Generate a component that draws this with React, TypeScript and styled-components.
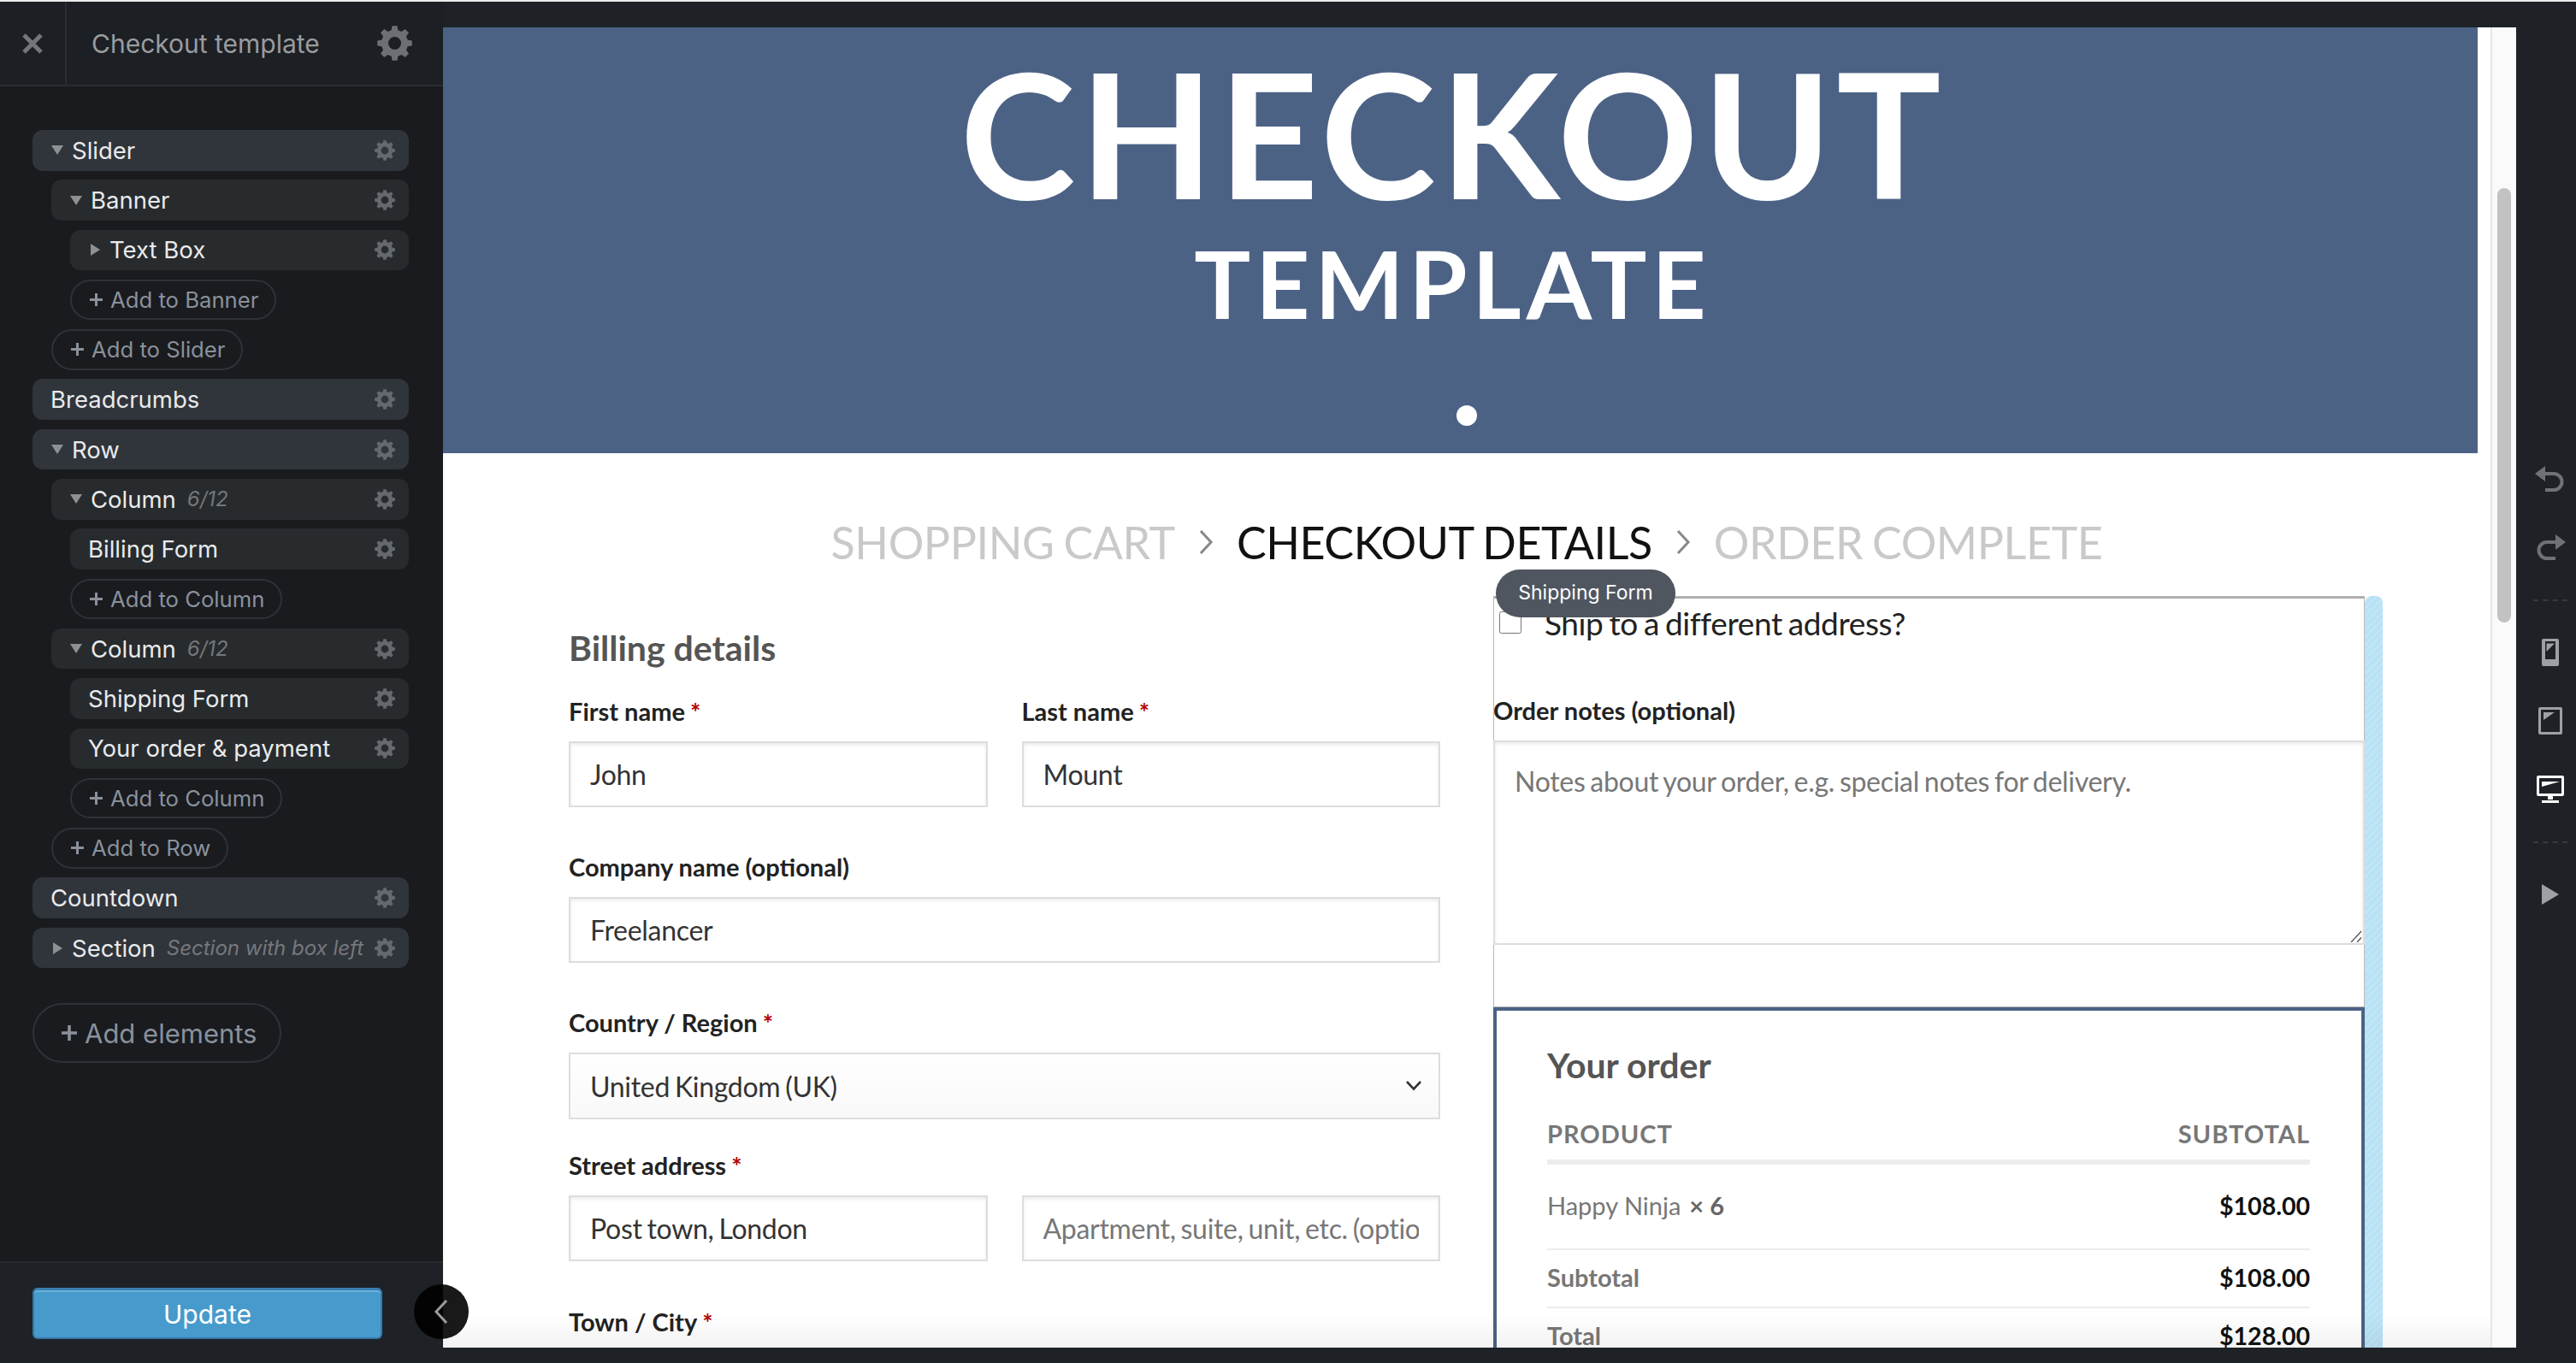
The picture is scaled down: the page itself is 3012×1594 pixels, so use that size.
import React from "react";
import styled, { createGlobalStyle } from "styled-components";

const GlobalStyle = createGlobalStyle`
	html, body {
		margin: 0;
		padding: 0;
		background: #1e2226;
		overflow: hidden;
	}
	* {
		box-sizing: border-box;
	}
`;

const Shell = styled.div`
	position: relative;
	display: grid;
	grid-template-columns: 518px 1fr 70px;
	width: 3012px;
	height: 1594px;
	overflow: hidden;
	border-top: 2px solid #ececec;
	background: #1e2226;
`;

/* ---------- sidebar ---------- */

const Sidebar = styled.aside`
	display: flex;
	flex-direction: column;
	height: 1592px;
	background: #191b1f;
	font-family: Inter, "Liberation Sans", sans-serif;
`;

const SideHeader = styled.header`
	display: flex;
	align-items: stretch;
	height: 99px;
	flex: none;
	background: #1c1f23;
	border-bottom: 2px solid #2a2d31;
`;

const CloseCell = styled.div`
	display: flex;
	align-items: center;
	justify-content: center;
	width: 78px;
	border-right: 2px solid #2a2d31;
	color: #74777a;
`;

const SideTitle = styled.div`
	flex: 1;
	padding-left: 29px;
	font-size: 30px;
	line-height: 98px;
	color: #9a9c9f;
`;

const HeaderGear = styled.div`
	display: flex;
	align-items: center;
	padding-right: 36px;
	color: #6d7073;
`;

const Tree = styled.div`
	flex: 1;
	padding: 51px 40px 0 38px;
`;

const TreeRow = styled.div<{ $level: number }>`
	display: flex;
	align-items: center;
	height: 47.5px;
	margin: 0 0 10.8px ${(p) => p.$level * 22}px;
	padding: 0 16px 0 21px;
	border-radius: 12px;
	background: ${(p) => (p.$level === 0 ? "#30343b" : "#272b2e")};
	color: #e9eaeb;
	font-size: 27.5px;
	white-space: nowrap;
`;

const RowCaret = styled.span`
	display: flex;
	align-items: center;
	justify-content: center;
	width: 14px;
	margin-left: 1px;
	margin-right: 10px;
	color: #8e9093;
`;

const RowHint = styled.span`
	flex: 1;
	min-width: 0;
	margin-left: 13px;
	font-size: 24px;
	font-style: italic;
	color: #75787b;
`;

const RowSpacer = styled.span`
	flex: 1;
`;

const RowGear = styled.span`
	display: flex;
	flex: none;
	margin-left: 8px;
	color: #65696e;
`;

const AddPill = styled.div<{ $level: number }>`
	display: flex;
	align-items: center;
	width: fit-content;
	height: 47.5px;
	margin: 0 0 10.8px ${(p) => p.$level * 22}px;
	padding: 0 19px 0 21px;
	border: 2px solid #2e3237;
	border-radius: 24px;
	color: #8a919b;
	font-size: 25.7px;
	white-space: nowrap;
`;

const PlusMark = styled.span`
	display: flex;
	margin-right: 9px;
`;

const AddElements = styled.div`
	display: flex;
	align-items: center;
	width: 291px;
	height: 70px;
	margin-top: 41px;
	padding-left: 32px;
	border: 2px solid #2e3237;
	border-radius: 35px;
	color: #8a919b;
	font-size: 31px;
	white-space: nowrap;
`;

const SideFooter = styled.footer`
	flex: none;
	height: 119px;
	padding: 29px 0 0 38px;
	background: #1e2226;
	border-top: 2px solid #272a2e;
`;

const UpdateButton = styled.button`
	display: block;
	width: 409px;
	height: 60px;
	padding: 0;
	border: 2px solid #3577a8;
	border-top: 3px solid #3a7fb2;
	border-radius: 6px;
	background: #479bcc;
	box-shadow: inset 0 2px 0 #6cb2dc;
	color: #fff;
	font-family: inherit;
	font-size: 30px;
`;

const CollapseButton = styled.div`
	position: absolute;
	left: 484px;
	top: 1500px;
	display: flex;
	align-items: center;
	justify-content: center;
	width: 64px;
	height: 64px;
	border-radius: 50%;
	background: rgba(0, 0, 0, 0.9);
	color: #9a9c9f;
`;

/* ---------- canvas ---------- */

const Canvas = styled.main`
	display: flex;
	height: 1544px;
	margin-top: 30px;
	background: #fff;
	overflow: hidden;
`;

const Page = styled.div`
	position: relative;
	flex: 1;
	min-width: 0;
	overflow: hidden;
	font-family: Lato, "Open Sans", sans-serif;
	color: #111;
`;

const PageFade = styled.div`
	position: absolute;
	left: 0;
	right: 0;
	bottom: 0;
	height: 40px;
	background: linear-gradient(rgba(0, 0, 0, 0), rgba(0, 0, 0, 0.05));
	pointer-events: none;
`;

const ScrollTrack = styled.div`
	flex: none;
	width: 30px;
	padding: 188px 6px 0;
	background: #fafafa;
	border-left: 2px solid #e6e6e6;
`;

const ScrollThumb = styled.div`
	width: 16px;
	height: 508px;
	border-radius: 8px;
	background: #c2c2c2;
`;

const Banner = styled.section`
	position: relative;
	display: flex;
	flex-direction: column;
	align-items: center;
	width: 2379px;
	height: 498px;
	padding: 22px 18px 0 0;
	background: #4c6285;
	color: #fff;
`;

const BannerTitle = styled.h1`
	margin: 0;
	font-size: 204px;
	line-height: 200px;
	letter-spacing: 5px;
	font-weight: 700;
`;

const BannerSub = styled.h2`
	margin: 16px 0 0;
	font-size: 110px;
	line-height: 120px;
	letter-spacing: 6px;
	font-weight: 700;
`;

const SlideDot = styled.span`
	position: absolute;
	left: 1185px;
	top: 442px;
	width: 24px;
	height: 24px;
	border-radius: 50%;
	background: #fff;
`;

const Steps = styled.nav`
	display: flex;
	align-items: center;
	justify-content: center;
	gap: 27px;
	height: 60px;
	margin-top: 74px;
`;

const Step = styled.span<{ $active?: boolean }>`
	font-size: 52px;
	line-height: 60px;
	letter-spacing: -0.4px;
	word-spacing: -2px;
	color: ${(p) => (p.$active ? "#111" : "#c9c9c9")};
`;

const StepArrow = styled.span`
	display: flex;
	color: #888;
`;

const Columns = styled.div`
	display: grid;
	grid-template-columns: 1019px 1019px;
	column-gap: 62px;
	margin-top: 33px;
	padding-left: 147px;
`;

const BillingColumn = styled.div`
	padding-top: 41px;
`;

const SectionHeading = styled.h3`
	margin: 0;
	font-size: 41px;
	line-height: 40px;
	font-weight: 700;
	color: #555;
`;

const BillingHeading = styled(SectionHeading)`
	margin-bottom: 34px;
`;

const FieldRow = styled.div`
	display: grid;
	grid-template-columns: 1fr 1fr;
	column-gap: 40px;
`;

const Field = styled.div<{ $after?: number }>`
	margin-bottom: ${(p) => p.$after ?? 50}px;
`;

const FieldLabel = styled.label`
	display: block;
	margin-bottom: 15px;
	font-size: 29px;
	line-height: 40px;
	font-weight: 700;
	color: #222;
`;

const Req = styled.span`
	color: #b20000;
	margin-left: 6px;
`;

const TextInput = styled.input`
	display: block;
	width: 100%;
	height: 77px;
	padding: 0 23px;
	border: 2px solid #ddd;
	border-radius: 0;
	outline: none;
	box-shadow: inset 0 2px 4px rgba(0, 0, 0, 0.09);
	background: #fff;
	color: #333;
	font-family: Lato, sans-serif;
	font-size: 32px;
	letter-spacing: -0.3px;
	word-spacing: -2px;
	&::placeholder {
		color: #777;
		opacity: 1;
	}
`;

const SelectWrap = styled.div`
	position: relative;
`;

const SelectBox = styled.select`
	display: block;
	width: 100%;
	height: 78px;
	padding: 0 23px;
	border: 2px solid #ddd;
	border-radius: 0;
	outline: none;
	appearance: none;
	background: linear-gradient(#fff, #f8f8f8);
	color: #333;
	font-family: Lato, sans-serif;
	font-size: 32px;
	letter-spacing: -0.3px;
	word-spacing: -2px;
`;

const SelectChevron = styled.span`
	position: absolute;
	right: 21px;
	top: 32px;
	display: flex;
	color: #333;
`;

const ShippingColumn = styled.div`
	position: relative;
`;

const BlueBar = styled.div`
	position: absolute;
	left: 100%;
	top: 0;
	bottom: 0;
	width: 21px;
	border-radius: 8px 8px 0 0;
	background: repeating-linear-gradient(135deg, #b7e1f5 0 3px, #c0e5f7 3px 6px);
`;

const ShippingForm = styled.div`
	position: relative;
	height: 481px;
	padding-top: 3px;
	border-top: 3px solid #aaa;
	outline: 1px solid #b8b8b8;
	outline-offset: -1px;
`;

const FormTag = styled.div`
	position: absolute;
	left: 3px;
	top: -34px;
	display: flex;
	align-items: center;
	justify-content: center;
	width: 210px;
	height: 56px;
	padding-bottom: 2px;
	border-radius: 28px;
	background: #50565f;
	color: #fff;
	font-family: Inter, "Liberation Sans", sans-serif;
	font-size: 23px;
	z-index: 2;
`;

const CheckLine = styled.label`
	display: flex;
	align-items: center;
	height: 50px;
	padding-left: 7px;
	font-size: 37px;
	letter-spacing: -0.4px;
	word-spacing: -2px;
	color: #222;
`;

const CheckInput = styled.input`
	width: 26px;
	height: 26px;
	margin: 0 27px 0 0;
`;

const NotesLabel = styled(FieldLabel)`
	margin-top: 58px;
	margin-bottom: 15px;
`;

const NotesWrap = styled.div`
	position: relative;
`;

const NotesArea = styled.textarea`
	display: block;
	width: 100%;
	height: 239px;
	padding: 26px 23px;
	border: 2px solid #ddd;
	border-radius: 0;
	outline: none;
	resize: none;
	box-shadow: inset 0 2px 4px rgba(0, 0, 0, 0.09);
	font-family: Lato, sans-serif;
	font-size: 32px;
	letter-spacing: -0.3px;
	word-spacing: -2px;
	&::placeholder {
		color: #777;
		opacity: 1;
	}
`;

const NotesGrip = styled.span`
	position: absolute;
	right: 3px;
	bottom: 3px;
	display: flex;
	color: #555;
`;

const OrderBox = styled.section`
	padding: 39px 60px 0 59px;
	border: 4px solid #4c6285;
	border-bottom: 0;
`;

const OrderHeading = styled(SectionHeading)`
	line-height: 50px;
	margin-bottom: 35px;
`;

const OrderHead = styled.div`
	display: flex;
	justify-content: space-between;
	padding-bottom: 10px;
	border-bottom: 6px solid #ececec;
	font-size: 29px;
	line-height: 40px;
	font-weight: 700;
	letter-spacing: 1px;
	color: #777;
`;

const OrderLine = styled.div<{ $tall?: boolean }>`
	display: flex;
	align-items: center;
	justify-content: space-between;
	height: ${(p) => (p.$tall ? 100 : 68)}px;
	padding-bottom: 3px;
	border-bottom: 2px solid #ececec;
	font-size: 29px;
	color: #777;
`;

const OrderName = styled.span<{ $strong?: boolean }>`
	font-weight: ${(p) => (p.$strong ? 700 : 400)};
`;

const OrderQty = styled.strong`
	margin-left: 10px;
	color: #666;
`;

const OrderPrice = styled.strong`
	font-size: 28.5px;
	color: #111;
`;

/* ---------- right rail ---------- */

const Rail = styled.aside`
	display: flex;
	flex-direction: column;
	align-items: center;
	padding: 518px 0 0 10px;
	background: #1e2226;
`;

const RailButton = styled.div`
	display: flex;
	align-items: center;
	justify-content: center;
	flex: none;
	height: 80px;
	width: 100%;
`;

const RailDivider = styled.div`
	flex: none;
	width: 40px;
	margin: 21px 0 20px;
	border-top: 2px dashed #363a3e;
`;

/* ---------- icons ---------- */

const gearPath = (() => {
	const teeth = 8;
	const outer = 12;
	const inner = 9.2;
	const pts: string[] = [];
	for (let i = 0; i < teeth; i++) {
		const a = (i / teeth) * Math.PI * 2;
		const w = Math.PI / teeth;
		[
			[inner, a - w * 0.62],
			[outer, a - w * 0.38],
			[outer, a + w * 0.38],
			[inner, a + w * 0.62],
		].forEach(([r, t]) => {
			pts.push(`${(12 + r * Math.cos(t)).toFixed(2)} ${(12 + r * Math.sin(t)).toFixed(2)}`);
		});
	}
	return `M${pts.join("L")}ZM12 7.6a4.4 4.4 0 1 0 0 8.8a4.4 4.4 0 1 0 0-8.8Z`;
})();

const Gear = ({ size }: { size: number }) => (
	<svg width={size} height={size} viewBox="0 0 24 24" fill="currentColor">
		<path fillRule="evenodd" d={gearPath} />
	</svg>
);

const Cross = () => (
	<svg width="24" height="24" viewBox="0 0 24 24" stroke="currentColor" strokeWidth="5" fill="none">
		<path d="M2 2 22 22M22 2 2 22" />
	</svg>
);

const Caret = ({ open }: { open: boolean }) =>
	open ? (
		<svg width="14" height="11" viewBox="0 0 14 11" fill="currentColor">
			<path d="M0 0h14L7 11Z" />
		</svg>
	) : (
		<svg width="11" height="14" viewBox="0 0 11 14" fill="currentColor">
			<path d="M0 0v14l11-7Z" />
		</svg>
	);

const Plus = ({ size }: { size: number }) => (
	<svg width={size} height={size} viewBox="0 0 16 16" fill="currentColor">
		<path d="M6.4 0h3.2v6.4H16v3.2H9.6V16H6.4V9.6H0V6.4h6.4Z" />
	</svg>
);

const Chevron = ({ dir }: { dir: "left" | "right" }) => (
	<svg width="18" height="28" viewBox="0 0 18 28" fill="none" stroke="currentColor" strokeWidth="3">
		<path d={dir === "right" ? "M3 1 15 14 3 27" : "M15 1 3 14 15 27"} />
	</svg>
);

const UndoIcon = ({ flip }: { flip?: boolean }) => (
	<svg width="36" height="30" viewBox="0 0 36 30" style={flip ? { transform: "scaleX(-1)" } : undefined}>
		<path d="M0 9 12 0v18Z" fill="#6e7275" />
		<path d="M11 9h11a9.5 9.5 0 0 1 0 19H12" fill="none" stroke="#6e7275" strokeWidth="4" />
	</svg>
);

const PhoneIcon = () => (
	<svg width="20" height="32" viewBox="0 0 20 32">
		<rect width="20" height="32" rx="2" fill="#9ea1a4" />
		<rect x="4" y="3" width="12" height="21" fill="#1e2226" />
		<path d="M5.5 15V5.5H15Z" fill="#9ea1a4" />
	</svg>
);

const TabletIcon = () => (
	<svg width="28" height="32" viewBox="0 0 28 32">
		<rect width="28" height="32" rx="2" fill="#9ea1a4" />
		<rect x="3" y="3" width="22" height="26" fill="#1e2226" />
		<path d="M6 15V6h13Z" fill="#9ea1a4" />
	</svg>
);

const DesktopIcon = () => (
	<svg width="32" height="32" viewBox="0 0 32 32">
		<rect width="32" height="24" rx="2" fill="#fff" />
		<rect x="3" y="3" width="26" height="18" fill="#1e2226" />
		<path d="M6 13V7h21Z" fill="#fff" />
		<path d="M13 24h6v4h-6ZM6 29h20v3H6Z" fill="#fff" />
	</svg>
);

const PlayIcon = () => (
	<svg width="20" height="24" viewBox="0 0 20 24" fill="#9ea1a4">
		<path d="M0 0v24l20-12Z" />
	</svg>
);

const SelectArrow = () => (
	<svg width="20" height="13" viewBox="0 0 20 13" fill="none" stroke="currentColor" strokeWidth="2.6">
		<path d="M2 2 10 10.5 18 2" />
	</svg>
);

const GripLines = () => (
	<svg width="14" height="14" viewBox="0 0 14 14" fill="none" stroke="currentColor" strokeWidth="1.3">
		<path d="M1 14 13 1M8 14 13 8.5" />
	</svg>
);

/* ---------- data ---------- */

type TreeItem = {
	level: number;
	label: string;
	add?: boolean;
	caret?: "open" | "closed";
	hint?: string;
};

const treeItems: TreeItem[] = [
	{ level: 0, label: "Slider", caret: "open" },
	{ level: 1, label: "Banner", caret: "open" },
	{ level: 2, label: "Text Box", caret: "closed" },
	{ level: 2, label: "Add to Banner", add: true },
	{ level: 1, label: "Add to Slider", add: true },
	{ level: 0, label: "Breadcrumbs" },
	{ level: 0, label: "Row", caret: "open" },
	{ level: 1, label: "Column", caret: "open", hint: "6/12" },
	{ level: 2, label: "Billing Form" },
	{ level: 2, label: "Add to Column", add: true },
	{ level: 1, label: "Column", caret: "open", hint: "6/12" },
	{ level: 2, label: "Shipping Form" },
	{ level: 2, label: "Your order & payment" },
	{ level: 2, label: "Add to Column", add: true },
	{ level: 1, label: "Add to Row", add: true },
	{ level: 0, label: "Countdown" },
	{ level: 0, label: "Section", caret: "closed", hint: "Section with box left" },
];

const App = () => {
	return (
		<Shell>
			<GlobalStyle />
			<Sidebar>
				<SideHeader>
					<CloseCell>
						<Cross />
					</CloseCell>
					<SideTitle>Checkout template</SideTitle>
					<HeaderGear>
						<Gear size={41} />
					</HeaderGear>
				</SideHeader>
				<Tree>
					{treeItems.map((item, i) =>
						item.add ? (
							<AddPill key={i} $level={item.level}>
								<PlusMark>
									<Plus size={15} />
								</PlusMark>
								{item.label}
							</AddPill>
						) : (
							<TreeRow key={i} $level={item.level}>
								{item.caret && (
									<RowCaret>
										<Caret open={item.caret === "open"} />
									</RowCaret>
								)}
								{item.label}
								{item.hint ? <RowHint>{item.hint}</RowHint> : <RowSpacer />}
								<RowGear>
									<Gear size={24} />
								</RowGear>
							</TreeRow>
						)
					)}
					<AddElements>
						<PlusMark>
							<Plus size={18} />
						</PlusMark>
						Add elements
					</AddElements>
				</Tree>
				<SideFooter>
					<UpdateButton>Update</UpdateButton>
				</SideFooter>
			</Sidebar>

			<Canvas>
				<Page>
					<Banner>
						<BannerTitle>CHECKOUT</BannerTitle>
						<BannerSub>TEMPLATE</BannerSub>
						<SlideDot />
					</Banner>
					<Steps>
						<Step>SHOPPING CART</Step>
						<StepArrow>
							<Chevron dir="right" />
						</StepArrow>
						<Step $active>CHECKOUT DETAILS</Step>
						<StepArrow>
							<Chevron dir="right" />
						</StepArrow>
						<Step>ORDER COMPLETE</Step>
					</Steps>
					<Columns>
						<BillingColumn>
							<BillingHeading>Billing details</BillingHeading>
							<FieldRow>
								<Field>
									<FieldLabel>
										First name<Req>*</Req>
									</FieldLabel>
									<TextInput defaultValue="John" />
								</Field>
								<Field>
									<FieldLabel>
										Last name<Req>*</Req>
									</FieldLabel>
									<TextInput defaultValue="Mount" />
								</Field>
							</FieldRow>
							<Field>
								<FieldLabel>Company name (optional)</FieldLabel>
								<TextInput defaultValue="Freelancer" />
							</Field>
							<Field $after={34}>
								<FieldLabel>
									Country / Region<Req>*</Req>
								</FieldLabel>
								<SelectWrap>
									<SelectBox defaultValue="United Kingdom (UK)">
										<option>United Kingdom (UK)</option>
									</SelectBox>
									<SelectChevron>
										<SelectArrow />
									</SelectChevron>
								</SelectWrap>
							</Field>
							<Field $after={51}>
								<FieldLabel>
									Street address<Req>*</Req>
								</FieldLabel>
								<FieldRow>
									<TextInput defaultValue="Post town, London" />
									<TextInput placeholder="Apartment, suite, unit, etc. (optional)" />
								</FieldRow>
							</Field>
							<FieldLabel>
								Town / City<Req>*</Req>
							</FieldLabel>
						</BillingColumn>

						<ShippingColumn>
							<BlueBar />
							<ShippingForm>
								<FormTag>Shipping Form</FormTag>
								<CheckLine>
									<CheckInput type="checkbox" />
									Ship to a different address?
								</CheckLine>
								<NotesLabel>Order notes (optional)</NotesLabel>
								<NotesWrap>
									<NotesArea placeholder="Notes about your order, e.g. special notes for delivery." />
									<NotesGrip>
										<GripLines />
									</NotesGrip>
								</NotesWrap>
							</ShippingForm>
							<OrderBox>
								<OrderHeading>Your order</OrderHeading>
								<OrderHead>
									<span>PRODUCT</span>
									<span>SUBTOTAL</span>
								</OrderHead>
								<OrderLine $tall>
									<OrderName>
										Happy Ninja<OrderQty>× 6</OrderQty>
									</OrderName>
									<OrderPrice>$108.00</OrderPrice>
								</OrderLine>
								<OrderLine>
									<OrderName $strong>Subtotal</OrderName>
									<OrderPrice>$108.00</OrderPrice>
								</OrderLine>
								<OrderLine>
									<OrderName $strong>Total</OrderName>
									<OrderPrice>$128.00</OrderPrice>
								</OrderLine>
							</OrderBox>
						</ShippingColumn>
					</Columns>
					<PageFade />
				</Page>
				<ScrollTrack>
					<ScrollThumb />
				</ScrollTrack>
			</Canvas>

			<Rail>
				<RailButton>
					<UndoIcon />
				</RailButton>
				<RailButton>
					<UndoIcon flip />
				</RailButton>
				<RailDivider />
				<RailButton>
					<PhoneIcon />
				</RailButton>
				<RailButton>
					<TabletIcon />
				</RailButton>
				<RailButton>
					<DesktopIcon />
				</RailButton>
				<RailDivider />
				<RailButton>
					<PlayIcon />
				</RailButton>
			</Rail>

			<CollapseButton>
				<Chevron dir="left" />
			</CollapseButton>
		</Shell>
	);
};

export default App;
